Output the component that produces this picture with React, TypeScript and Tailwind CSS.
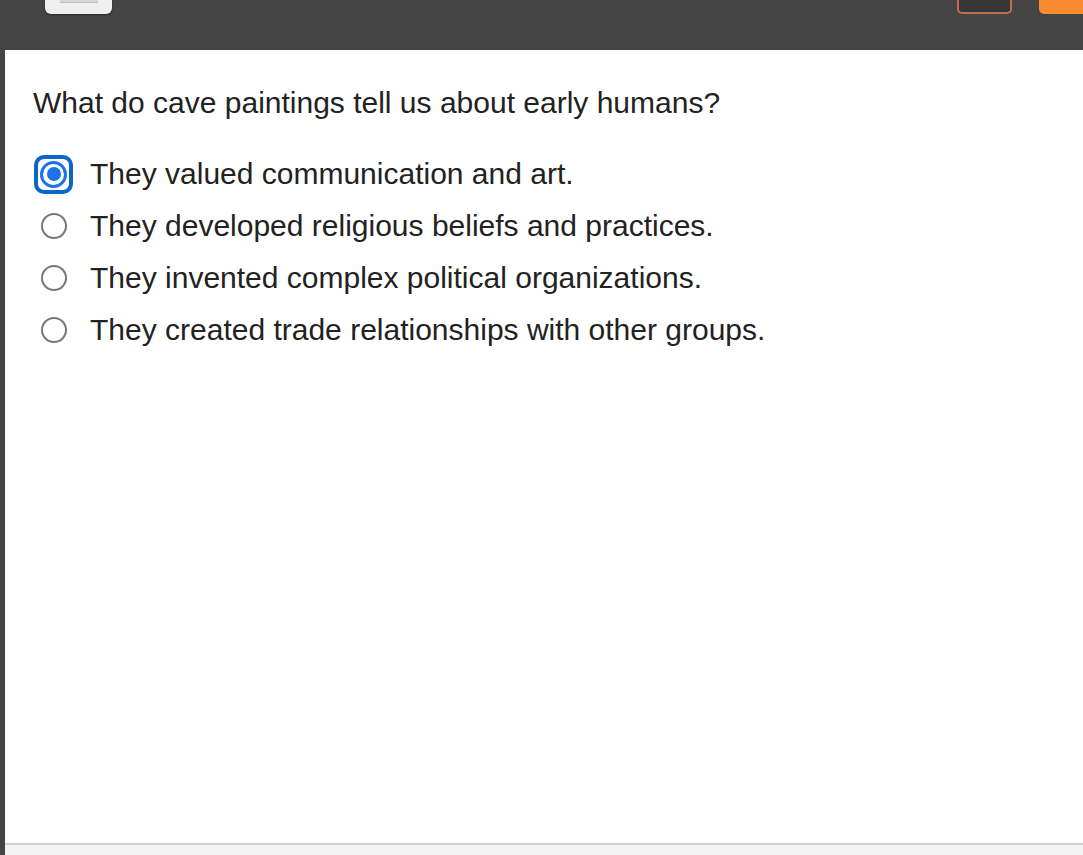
import { useState } from 'react'

const options = [
  'They valued communication and art.',
  'They developed religious beliefs and practices.',
  'They invented complex political organizations.',
  'They created trade relationships with other groups.',
]

function Radio({ checked }: { checked: boolean }) {
  if (checked) {
    return (
      <div className="w-[39px] h-[39px] rounded-[10px] border-[4px] border-[#0a67c9] flex items-center justify-center">
        <div className="w-[27px] h-[27px] rounded-full border-[3px] border-[#1a73e8] flex items-center justify-center">
          <div className="w-[14px] h-[14px] rounded-full bg-[#1a73e8]" />
        </div>
      </div>
    )
  }
  return <div className="w-[26px] h-[26px] rounded-full border-[2px] border-[#767676] bg-white" />
}

export default function App() {
  const [selected, setSelected] = useState(0)

  return (
    <div className="w-[1083px] h-[855px] flex flex-col bg-[#444444] overflow-hidden" style={{ fontFamily: '"Liberation Sans", Arial, sans-serif' }}>
      {/* top toolbar */}
      <div className="h-[50px] flex items-start justify-between pl-[45px] shrink-0">
        <div className="w-[67px] h-[14px] bg-[#efefef] rounded-b-[6px] shadow-[0_1px_2px_rgba(0,0,0,0.4)] flex justify-center">
          <div className="w-[38px] h-[3px] bg-[#d6d6d6] border-b border-[#bdbdbd]" />
        </div>
        <div className="flex gap-[27px]">
          <div className="w-[55px] h-[14px] rounded-b-[5px] border-[2px] border-t-0 border-[#c56a4c] bg-[#363636]" />
          <div className="w-[44px] h-[14px] rounded-bl-[5px] bg-[#f68b2f]" />
        </div>
      </div>

      {/* content */}
      <div className="flex-1 flex pl-[5px]">
        <div className="flex-1 flex flex-col bg-white">
          <div className="flex-1 pl-[28px] pt-[36px] text-[#222222]">
            <h1 className="text-[30px] leading-[34px] mb-[28px]">
              What do cave paintings tell us about early humans?
            </h1>
            <div className="flex flex-col">
              {options.map((opt, i) => (
                <label
                  key={i}
                  className="h-[52px] flex items-center cursor-pointer"
                  onClick={() => setSelected(i)}
                >
                  <div className="w-[41px] flex justify-center">
                    <Radio checked={selected === i} />
                  </div>
                  <span className="ml-[16px] text-[30px] leading-[34px]">{opt}</span>
                </label>
              ))}
            </div>
          </div>
          <div className="h-[12px] border-t-[2px] border-[#cfcfcf] bg-[#f4f4f4] shrink-0" />
        </div>
      </div>
    </div>
  )
}
